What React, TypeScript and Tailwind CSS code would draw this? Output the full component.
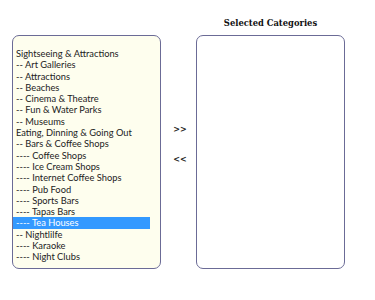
import React from 'react';

const ITEMS = [
    'Sightseeing & Attractions',
    '-- Art Galleries',
    '-- Attractions',
    '-- Beaches',
    '-- Cinema & Theatre',
    '-- Fun & Water Parks',
    '-- Museums',
    'Eating, Dinning & Going Out',
    '-- Bars & Coffee Shops',
    '---- Coffee Shops',
    '---- Ice Cream Shops',
    '---- Internet Coffee Shops',
    '---- Pub Food',
    '---- Sports Bars',
    '---- Tapas Bars',
    '---- Tea Houses',
    '-- Nightlilfe',
    '---- Karaoke',
    '---- Night Clubs',
];

const SELECTED = '---- Tea Houses';

export default function App() {
    return (
        <div className="w-[375px] h-[300px] bg-white flex items-start pl-[12px] pt-[15px]">
            {/* Available list */}
            <div className="flex flex-col">
                <div className="h-[20px]" />
                <div className="w-[149px] h-[234px] rounded-[7px] border border-[#6b6b96] bg-[#fefeee] pt-[12px]">
                    <ul className="w-[137px] font-['Lato',sans-serif] text-[9.3px] leading-[11.3px] text-[#222]">
                        {ITEMS.map((item) => (
                            <li
                                key={item}
                                className={
                                    item === SELECTED
                                        ? 'pl-[3px] whitespace-nowrap bg-[#3399ff] text-white'
                                        : 'pl-[3px] whitespace-nowrap'
                                }
                            >
                                {item}
                            </li>
                        ))}
                    </ul>
                </div>
            </div>

            {/* Move buttons */}
            <div className="w-[35px] flex flex-col items-center pl-[3px] mt-[110px] font-['DejaVu_Sans',sans-serif] text-[8px] leading-[10px] font-bold text-[#222]">
                <span>&gt;&gt;</span>
                <span className="mt-[20px]">&lt;&lt;</span>
            </div>

            {/* Selected list */}
            <div className="flex flex-col">
                <div className="h-[20px] pb-[3px] text-center font-['DejaVu_Serif',serif] font-bold text-[8.4px] leading-[17px] text-[#111]">
                    Selected Categories
                </div>
                <div className="w-[149px] h-[234px] rounded-[7px] border border-[#6b6b96] bg-white" />
            </div>
        </div>
    );
}
